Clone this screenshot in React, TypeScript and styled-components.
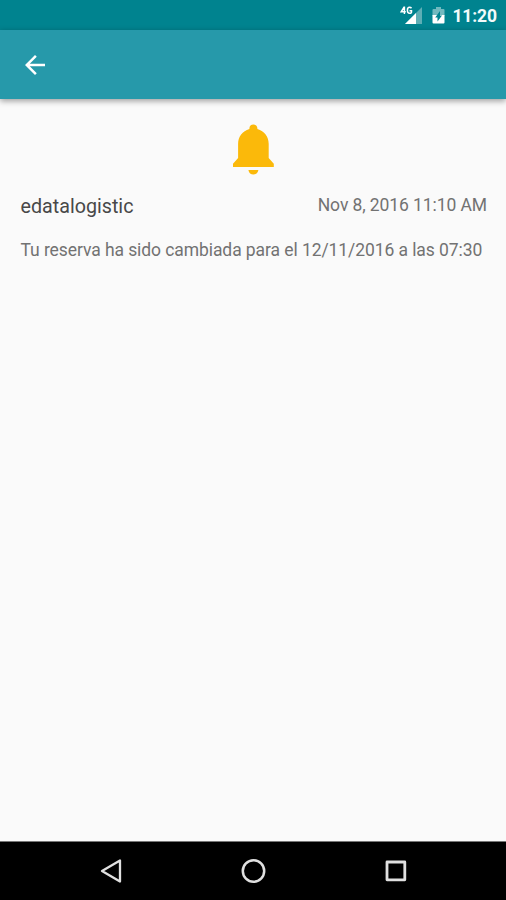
import React from 'react';
import styled, { createGlobalStyle } from 'styled-components';

const GlobalStyle = createGlobalStyle`
  * { box-sizing: border-box; }
  body { margin: 0; background: #fafafa; font-family: Roboto, sans-serif; }
  svg { display: block; }
`;

const Screen = styled.div`
  display: flex;
  flex-direction: column;
  height: 100vh;
  overflow: hidden;
  background: #fafafa;
`;

const StatusBar = styled.header`
  display: flex;
  align-items: center;
  justify-content: flex-end;
  flex: none;
  height: 30px;
  padding: 2px 9px 0 0;
  background: #00838f;
`;

const SignalIcon = styled.svg`
  margin-right: 10px;
`;

const BatteryIcon = styled.svg`
  margin-right: 7px;
`;

const Clock = styled.time`
  color: #f2fafa;
  font-size: 17.5px;
  font-weight: 700;
  line-height: 24px;
  letter-spacing: -0.1px;
  white-space: nowrap;
`;

const AppBar = styled.nav`
  display: flex;
  align-items: center;
  flex: none;
  height: 69px;
  padding-left: 20px;
  background: #2699aa;
  box-shadow: 0 2px 6px rgba(0, 0, 0, 0.38);
`;

const IconButton = styled.button`
  display: flex;
  padding: 0;
  border: 0;
  background: none;
`;

const Content = styled.main`
  flex: 1;
  padding: 21px 19px 0 20.5px;
`;

const BellIcon = styled.svg`
  margin: 0 auto;
`;

const MessageHeader = styled.div`
  display: flex;
  justify-content: space-between;
  align-items: flex-start;
  height: 45px;
  margin-top: 18px;
`;

const Sender = styled.h1`
  margin: 2px 0 0;
  color: #484848;
  font-size: 19.7px;
  font-weight: 400;
  line-height: 24px;
`;

const SentDate = styled.time`
  color: #727272;
  font-size: 17.5px;
  line-height: 24px;
  letter-spacing: -0.09px;
  white-space: nowrap;
`;

const Message = styled.p`
  margin: 0;
  color: #727272;
  font-size: 17.5px;
  line-height: 24px;
  letter-spacing: -0.08px;
  white-space: nowrap;
`;

const NavigationBar = styled.footer`
  display: grid;
  grid-template-columns: repeat(3, 142px);
  justify-content: center;
  place-items: center;
  flex: none;
  height: 59px;
  border-top: 1px solid #777;
  background: #000;
`;

export default function App() {
  return (
    <>
      <GlobalStyle />
      <Screen>
        <StatusBar>
          <SignalIcon width="22" height="20" viewBox="0 0 22 20">
            <path d="M22 1V18H5Z" fill="#5daeb5" />
            <path d="M16 7V18H5Z" fill="#fff" />
            <path d="M0 0H13V9H0Z" fill="#00838f" />
            <path d="M4.4 .5V8M4.2 1L1.2 5.8H5.8M11.5 2.3Q10.8 1.3 9.5 1.3Q7.4 1.3 7.4 4.3Q7.4 7.3 9.5 7.3Q11.5 7.3 11.5 6V4.8H9.5" fill="none" stroke="#fff" strokeWidth="1.5" />
          </SignalIcon>
          <BatteryIcon width="13" height="18" viewBox="0 0 13 18">
            <path d="M4 0H9V2H11.5Q12.5 2 12.5 3V9H.5V3Q.5 2 1.5 2H4Z" fill="#71b9bf" />
            <path d="M.5 8H12.5V15.5Q12.5 16.5 11.5 16.5H1.5Q.5 16.5 .5 15.5Z" fill="#fff" />
            <path d="M8 4V8.5H10L5.5 14.5V10.5H3.2Z" fill="#00838f" />
          </BatteryIcon>
          <Clock>11:20</Clock>
        </StatusBar>
        <AppBar>
          <IconButton aria-label="Volver">
            <svg width="30" height="30" viewBox="0 0 24 24" fill="#fff">
              <path d="M20 11H7.83l5.59-5.59L12 4l-8 8 8 8 1.41-1.41L7.83 13H20v-2z" />
            </svg>
          </IconButton>
        </AppBar>
        <Content>
          <BellIcon width="44" height="55" viewBox="0 0 44 55" fill="#fbb90a">
            <path d="M21.4 4.5C19 4.5 17.4 6.2 17.4 8.4V9C10.4 11 6.1 16.5 6.1 24V38L1 43.8V47H41.8V43.8L36.7 38V24C36.7 16.5 32.4 11 25.4 9V8.4C25.4 6.2 23.8 4.5 21.4 4.5ZM16.4 50H26.4C25.9 53 24 54.5 21.4 54.5S16.9 53 16.4 50Z" />
          </BellIcon>
          <MessageHeader>
            <Sender>edatalogistic</Sender>
            <SentDate>Nov 8, 2016 11:10 AM</SentDate>
          </MessageHeader>
          <Message>Tu reserva ha sido cambiada para el 12/11/2016 a las 07:30</Message>
        </Content>
        <NavigationBar>
          <svg width="24" height="24" viewBox="0 0 24 24" fill="none" stroke="#e0e0e0" strokeWidth="2.3" strokeLinejoin="round">
            <path d="M21 1.5V22.5L3 12Z" />
          </svg>
          <svg width="26" height="26" viewBox="0 0 26 26" fill="none" stroke="#e0e0e0" strokeWidth="2.5">
            <circle cx="13.5" cy="13" r="10.7" />
          </svg>
          <svg width="24" height="24" viewBox="0 0 24 24" fill="none" stroke="#e0e0e0" strokeWidth="2.8" strokeLinejoin="round">
            <rect x="4" y="3" width="17.8" height="17.8" />
          </svg>
        </NavigationBar>
      </Screen>
    </>
  );
}
